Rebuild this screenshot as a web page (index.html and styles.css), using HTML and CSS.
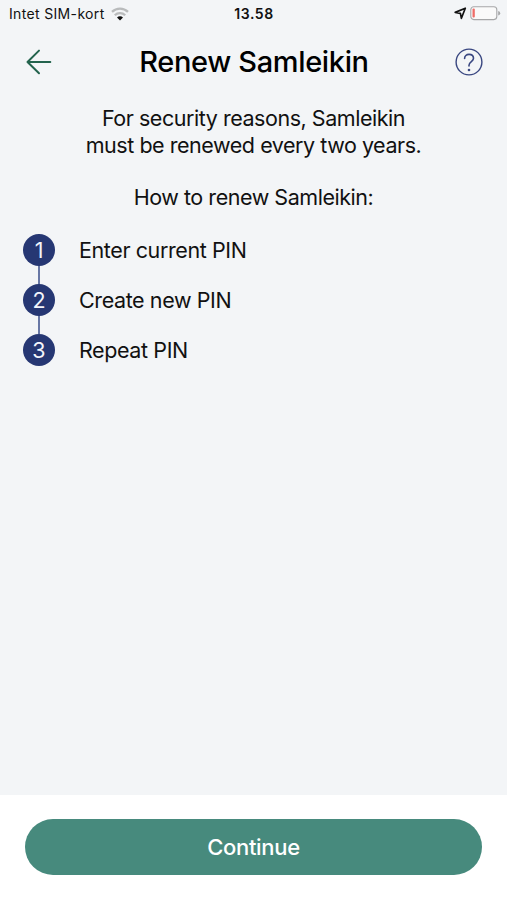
FILE: index.html
```html
<!DOCTYPE html>
<html lang="en">
<head>
<meta charset="utf-8">
<title>Renew Samleikin</title>
<link rel="stylesheet" href="styles.css">
</head>
<body>
<div class="screen">
  <div class="status">
    <div class="carrier"><span class="carrier-name">Intet SIM-kort</span>
      <svg class="wifi" width="18" height="14" viewBox="0 0 18 14" fill="none" stroke-width="2.3">
        <path d="M1 4.8a11.5 11.5 0 0 1 16 0" stroke="#b9bbbc"/>
        <path d="M3.8 8.2a7.4 7.4 0 0 1 10.4 0" stroke="#b9bbbc"/>
        <path d="M9 13.6 6 10.6a4.2 4.2 0 0 1 6 0Z" fill="#111"/>
      </svg>
    </div>
    <span class="time">13.58</span>
    <div class="indicators">
      <svg width="13" height="13" viewBox="0 0 13 13" fill="none" stroke="#111" stroke-width="1.7" stroke-linejoin="round"><path d="M11.3 1.2 1.2 5.4 6.4 6.3 7.4 11.3Z"/></svg>
      <svg width="31" height="15" viewBox="0 0 31 15"><rect x=".8" y=".8" width="26" height="12.8" rx="3" fill="#fafafa" stroke="#a6a7a8" stroke-width="1.1"/><rect x="2.5" y="2.6" width="2.3" height="9" rx="1" fill="#ef6c67"/><path d="M28.2 5v4.5q2-.6 2-2.25T28.2 5Z" fill="#a6a7a8"/></svg>
    </div>
  </div>
  <header class="header">
    <svg class="back" width="28" height="28" viewBox="0 0 28 28" fill="none" stroke="#23634d" stroke-width="2" stroke-linecap="round" stroke-linejoin="round"><path d="M25.3 14H2.5M14 2.6 2.5 14 14 25.2"/></svg>
    <h1 class="title">Renew Samleikin</h1>
    <svg class="help" width="28" height="28" viewBox="0 0 28 28" fill="none" stroke="#394781" stroke-width="1.4" stroke-linecap="round"><circle cx="14" cy="14" r="12.9"/><path d="M9.6 10.5C9.6 7.9 11.4 6.4 14 6.4S18.5 8 18.5 10.3C18.5 13.5 14 13.6 14 17.3V18" stroke-width="1.6"/><circle cx="14" cy="22" r="1.3" fill="#394781" stroke="none"/></svg>
  </header>
  <main class="content">
    <p class="intro">For security reasons, Samleikin<br>must be renewed every two years.</p>
    <p class="how">How to renew Samleikin:</p>
    <ol class="steps">
      <li class="step"><span class="badge">1</span><span class="label">Enter current PIN</span></li>
      <li class="step"><span class="badge">2</span><span class="label">Create new PIN</span></li>
      <li class="step"><span class="badge">3</span><span class="label">Repeat PIN</span></li>
    </ol>
  </main>
  <footer class="footer"><button class="continue">Continue</button></footer>
</div>
</body>
</html>
```
FILE: styles.css
```css
* { box-sizing: border-box; }
body { margin: 0; background: #f3f5f7; color: #111; font-family: Inter, "Liberation Sans", sans-serif; }
.screen { height: 900px; display: flex; flex-direction: column; }
.status { height: 28px; padding: 0 6px 0 9px; display: grid; grid-template-columns: 1fr auto 1fr; align-items: center; font-size: 14px; line-height: 28px; }
.carrier { display: flex; align-items: center; gap: 6px; letter-spacing: .34px; }
.wifi { margin-top: -1px; }
.time { margin-left: -2px; font-weight: 600; letter-spacing: .6px; }
.indicators { display: flex; justify-content: flex-end; align-items: center; gap: 3px; margin: -2px 0 0; }
.header { height: 68px; padding: 0 24px 0 25px; display: flex; justify-content: space-between; align-items: center; }
.title { margin: 0; color: #000; font-size: 29px; font-weight: 500; line-height: 36px; letter-spacing: -.36px; }
.content { flex: 1; padding: 9px 23px 0; font-size: 21.5px; line-height: 27px; letter-spacing: -.46px; }
.intro, .how { margin: 0; text-align: center; }
.how { margin-top: 25px; }
.steps { margin: 23px 0 0; padding: 0; list-style: none; }
.step { height: 50px; display: flex; align-items: flex-start; gap: 24px; line-height: 32px; letter-spacing: -.4px; background: linear-gradient(#6877a5, #6877a5) 15px 0 / 2px 100% no-repeat; }
.step:last-child { background: none; }
.badge { width: 32px; height: 32px; border-radius: 50%; background: #263773; color: #f3f5fb; text-align: center; letter-spacing: 0; }
.footer { height: 105px; padding: 24px 25px 0; background: #fff; }
.continue { display: block; width: 100%; height: 56px; padding: 0; border: 0; border-radius: 28px; background: #478a7d; color: #fff; font: 500 22px/56px Inter, "Liberation Sans", sans-serif; letter-spacing: -.3px; }
```
